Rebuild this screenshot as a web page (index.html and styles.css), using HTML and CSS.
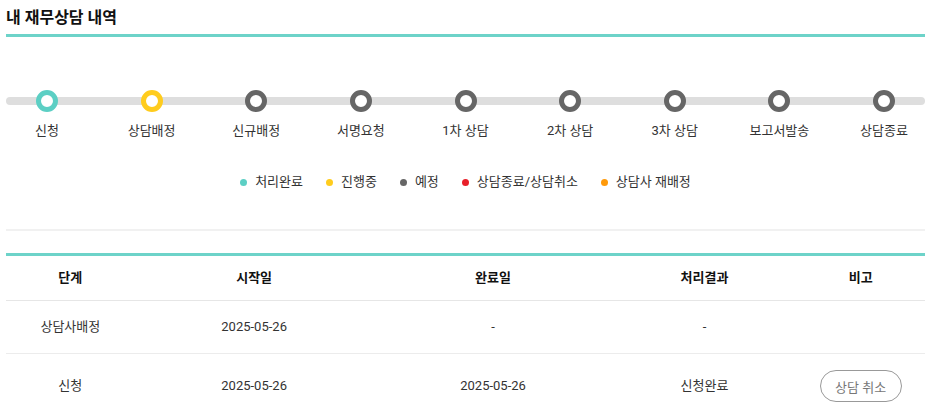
FILE: index.html
```html
<!DOCTYPE html>
<html lang="ko">
<head>
    <meta charset="UTF-8">
    <meta name="viewport" content="width=device-width, initial-scale=1.0">
    <title>내 재무상담 내역</title>
    <link rel="stylesheet" href="styles.css">
</head>
<body>
    <div class="consult-wrap">
        <h2 class="consult-title">내 재무상담 내역</h2>

        <!-- 진행 단계 -->
        <ul class="steps">
            <li class="step done"><span class="dot"></span><span class="step-name">신청</span></li>
            <li class="step ing"><span class="dot"></span><span class="step-name">상담배정</span></li>
            <li class="step"><span class="dot"></span><span class="step-name">신규배정</span></li>
            <li class="step"><span class="dot"></span><span class="step-name">서명요청</span></li>
            <li class="step"><span class="dot"></span><span class="step-name">1차 상담</span></li>
            <li class="step"><span class="dot"></span><span class="step-name">2차 상담</span></li>
            <li class="step"><span class="dot"></span><span class="step-name">3차 상담</span></li>
            <li class="step"><span class="dot"></span><span class="step-name">보고서발송</span></li>
            <li class="step"><span class="dot"></span><span class="step-name">상담종료</span></li>
        </ul>

        <ul class="legend">
            <li><span class="mark teal"></span>처리완료</li>
            <li><span class="mark yellow"></span>진행중</li>
            <li><span class="mark gray"></span>예정</li>
            <li><span class="mark red"></span>상담종료/상담취소</li>
            <li><span class="mark orange"></span>상담사 재배정</li>
        </ul>

        <hr class="divider">

        <table class="history">
            <colgroup>
                <col class="c-step">
                <col class="c-date">
                <col class="c-date">
                <col class="c-result">
                <col class="c-note">
            </colgroup>
            <thead>
                <tr>
                    <th>단계</th>
                    <th>시작일</th>
                    <th>완료일</th>
                    <th>처리결과</th>
                    <th>비고</th>
                </tr>
            </thead>
            <tbody>
                <tr>
                    <td>상담사배정</td>
                    <td>2025-05-26</td>
                    <td>-</td>
                    <td>-</td>
                    <td></td>
                </tr>
                <tr>
                    <td>신청</td>
                    <td>2025-05-26</td>
                    <td>2025-05-26</td>
                    <td>신청완료</td>
                    <td><button class="btn-cancel">상담 취소</button></td>
                </tr>
            </tbody>
        </table>
    </div>
</body>
</html>
```

FILE: styles.css
```css
* {
    margin: 0;
    padding: 0;
    box-sizing: border-box;
}

body {
    font-family: Roboto, "Noto Sans CJK KR", sans-serif;
    color: #333;
    background: #fff;
}

.consult-wrap {
    padding: 6px 11px 0 6px;
}

.consult-title {
    font-size: 16px;
    font-weight: 700;
    line-height: 24px;
    color: #111;
    padding-bottom: 4px;
    border-bottom: 3px solid #6dd3c9;
}

/* 진행 단계 */
.steps {
    list-style: none;
    display: flex;
    justify-content: space-between;
    margin-top: 53px;
    position: relative;
}

.steps::before {
    content: "";
    position: absolute;
    left: 0;
    right: 0;
    top: 7px;
    height: 8px;
    border-radius: 4px;
    background: #dedede;
}

.step {
    width: 82px;
    display: flex;
    flex-direction: column;
    align-items: center;
    position: relative;
}

.step .dot {
    width: 22px;
    height: 22px;
    border-radius: 50%;
    border: 5px solid #666;
    background: #fff;
}

.step.done .dot {
    border-color: #5ccfc4;
}

.step.ing .dot {
    border-color: #ffcc1d;
}

.step-name {
    margin-top: 11px;
    font-size: 13px;
    line-height: 16px;
    color: #333;
    white-space: nowrap;
}

.legend {
    list-style: none;
    display: flex;
    justify-content: center;
    gap: 23px;
    margin-top: 33px;
    font-size: 13px;
    line-height: 20px;
    color: #333;
}

.legend li {
    display: flex;
    align-items: center;
}

.mark {
    width: 7px;
    height: 7px;
    border-radius: 50%;
    margin-right: 8px;
}

.mark.teal { background: #5ccfc4; }
.mark.yellow { background: #ffcc1d; }
.mark.gray { background: #666; }
.mark.red { background: #e8202a; }
.mark.orange { background: #ff9a0a; }

.divider {
    border: 0;
    height: 2px;
    background: #f1f1f1;
    margin-top: 37px;
}

/* 내역 테이블 */
.history {
    width: 100%;
    margin-top: 22px;
    border-collapse: collapse;
    table-layout: fixed;
    border-top: 3px solid #6dd3c9;
    font-size: 13px;
    line-height: 20px;
}

.c-step { width: 14%; }
.c-date { width: 26%; }
.c-result { width: 20%; }
.c-note { width: 14%; }

.history th {
    font-weight: 700;
    color: #111;
    padding: 12px 0;
    border-bottom: 1px solid #e6e6e6;
}

.history td {
    text-align: center;
    color: #333;
    padding: 16px 0;
    border-bottom: 1px solid #ececec;
}

.btn-cancel {
    width: 82px;
    height: 32px;
    border: 1px solid #999;
    border-radius: 16px;
    background: #fff;
    color: #777;
    font-family: inherit;
    font-size: 13px;
    cursor: pointer;
}
```
